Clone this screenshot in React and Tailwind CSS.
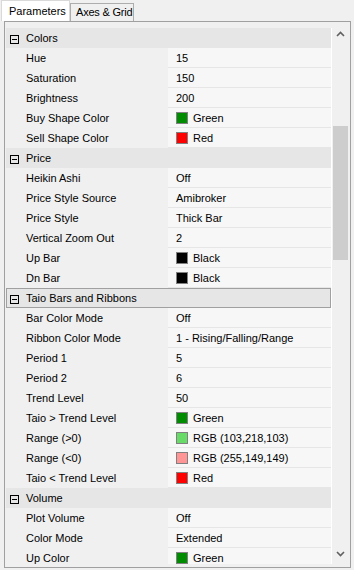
import React from 'react'

const sections = [
  { title: 'Colors', rows: [
    ['Hue', '15'], ['Saturation', '150'], ['Brightness', '200'],
    ['Buy Shape Color', 'Green', '#008c00'], ['Sell Shape Color', 'Red', '#ff0000'],
  ]},
  { title: 'Price', rows: [
    ['Heikin Ashi', 'Off'], ['Price Style Source', 'Amibroker'], ['Price Style', 'Thick Bar'],
    ['Vertical Zoom Out', '2'], ['Up Bar', 'Black', '#000000'], ['Dn Bar', 'Black', '#000000'],
  ]},
  { title: 'Taio Bars and Ribbons', selected: true, rows: [
    ['Bar Color Mode', 'Off'], ['Ribbon Color Mode', '1 - Rising/Falling/Range'],
    ['Period 1', '5'], ['Period 2', '6'], ['Trend Level', '50'],
    ['Taio > Trend Level', 'Green', '#008c00'], ['Range (>0)', 'RGB (103,218,103)', '#67da67'],
    ['Range (<0)', 'RGB (255,149,149)', '#ff9595'], ['Taio < Trend Level', 'Red', '#ff0000'],
  ]},
  { title: 'Volume', rows: [
    ['Plot Volume', 'Off'], ['Color Mode', 'Extended'], ['Up Color', 'Green', '#008c00'],
  ]},
]

function Header({ title, selected }){
  return (
    <div className={'h-[20px] flex items-center bg-[#e6e6e6] ' + (selected ? 'shadow-[inset_0_0_0_1px_#a0a0a0]' : '')}>
      <div className="ml-[4px] w-[9px] h-[9px] border border-black flex items-center justify-center mt-[2px]">
        <div className="w-[5px] h-px bg-black"/>
      </div>
      <span className="ml-[7px] pt-[1px]">{title}</span>
    </div>
  )
}

function Row({ name, value, swatch }){
  return (
    <div className="h-[20px] flex">
      <div className="w-[162px] bg-[#f0f0f0] pl-[20px] flex items-center pt-[1px]">{name}</div>
      <div className="flex-1 bg-[#f7f7f7] border-b border-[#e6e6e6] flex items-center pl-[8px] pt-[1px]">
        {swatch && <span className="w-[12px] h-[12px] border border-[#808080] mr-[5px] mb-[1px]" style={{ background: swatch }}/>}
        {value}
      </div>
    </div>
  )
}

export default function App(){
  return (
    <div className="w-[354px] h-[570px] bg-[#f0f0f0] overflow-hidden text-[11px] text-black leading-none" style={{ fontFamily: '"Liberation Sans", Arial, sans-serif' }}>
      <div className="h-[21px] flex items-end pl-[1px]">
        <div className="h-[21px] w-[69px] bg-white border-t border-l border-r border-[#d9d9d9] flex items-center pl-[7px] whitespace-nowrap">Parameters</div>
        <div className="h-[18px] w-[64px] bg-[#f0f0f0] border-t border-r border-l border-[#adadad] flex items-center pl-[5px] whitespace-nowrap tracking-[-0.2px]">Axes &amp; Grid</div>
      </div>
      <div className="ml-[4px] w-[347px] h-[547px] border border-[#a0a0a0] pt-[6px] pl-[1px]">
        <div className="flex h-[536px]">
          <div className="w-[325px] overflow-hidden">
            {sections.map(s => (
              <div key={s.title}>
                <Header title={s.title} selected={s.selected}/>
                {s.rows.map(r => <Row key={r[0]} name={r[0]} value={r[1]} swatch={r[2]}/>)}
              </div>
            ))}
          </div>
          <div className="w-px bg-white"/>
          <div className="w-[17px] bg-[#f0f0f0] flex flex-col items-center">
            <svg width="9" height="6" viewBox="0 0 9 6" className="mt-[3px]">
              <path d="M1 5 L4.5 1.5 L8 5" fill="none" stroke="#606060" strokeWidth="1.6"/>
            </svg>
            <div className="w-[15px] h-[134px] bg-[#cdcdcd] mt-[89px]"/>
            <div className="flex-1"/>
            <svg width="9" height="6" viewBox="0 0 9 6" className="mb-[7px]">
              <path d="M1 1 L4.5 4.5 L8 1" fill="none" stroke="#606060" strokeWidth="1.6"/>
            </svg>
          </div>
        </div>
      </div>
    </div>
  )
}
